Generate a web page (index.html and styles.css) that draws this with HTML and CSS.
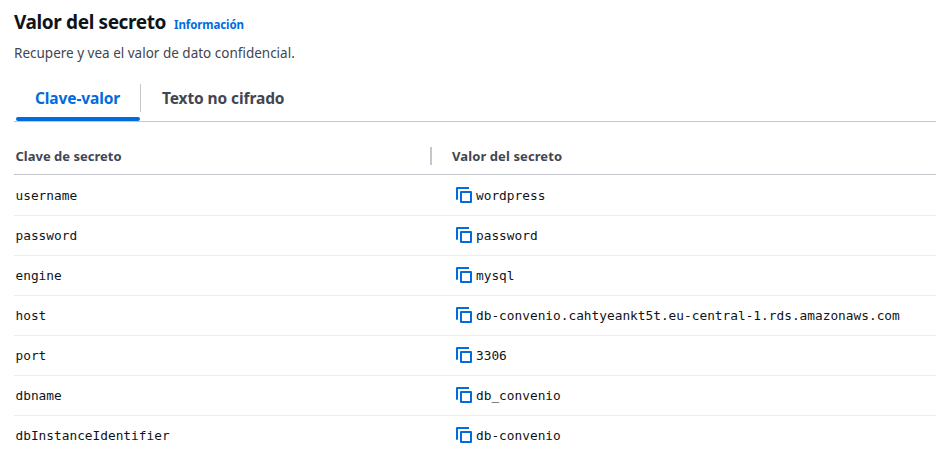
FILE: index.html
```html
<!DOCTYPE html>
<html lang="es">
<head>
<meta charset="utf-8">
<title>Valor del secreto</title>
<link rel="stylesheet" href="styles.css">
</head>
<body>
<svg class="defs" width="0" height="0"><symbol id="copy" viewBox="0 0 16 16"><path d="M5 5h10v10H5z M1 12.7V1h12" fill="none" stroke="currentColor" stroke-width="2" stroke-linejoin="round"/></symbol></svg>
<header class="head">
<h1><span class="title">Valor del secreto</span><a class="info">Información</a></h1>
<p>Recupere y vea el valor de dato confidencial.</p>
</header>
<nav class="tabs"><div class="tab active">Clave-valor</div><div class="tab">Texto no cifrado</div></nav>
<main class="table">
<div class="row header"><div class="key">Clave de secreto</div><div class="label">Valor del secreto</div></div>
<div class="row"><div class="key">username</div><div class="value"><svg><use href="#copy"/></svg>wordpress</div></div>
<div class="row"><div class="key">password</div><div class="value"><svg><use href="#copy"/></svg>password</div></div>
<div class="row"><div class="key">engine</div><div class="value"><svg><use href="#copy"/></svg>mysql</div></div>
<div class="row"><div class="key">host</div><div class="value"><svg><use href="#copy"/></svg>db-convenio.cahtyeankt5t.eu-central-1.rds.amazonaws.com</div></div>
<div class="row"><div class="key">port</div><div class="value"><svg><use href="#copy"/></svg>3306</div></div>
<div class="row"><div class="key">dbname</div><div class="value"><svg><use href="#copy"/></svg>db_convenio</div></div>
<div class="row"><div class="key">dbInstanceIdentifier</div><div class="value"><svg><use href="#copy"/></svg>db-convenio</div></div>
</main>
</body>
</html>
```
FILE: styles.css
```css
* { box-sizing: border-box; }
body { margin: 0; height: 469px; overflow: hidden; background: #fff; color: #0f141a; font-family: "Noto Sans", "Open Sans", sans-serif; }
.defs { display: block; }
.head { height: 78px; padding: 10px 0 0 14px; }
h1 { margin: 0; display: flex; align-items: baseline; gap: 8px; font-size: 19px; line-height: 24px; white-space: nowrap; }
.title { letter-spacing: -.38px; }
.info { color: #006ce0; font-size: 11.5px; letter-spacing: -.1px; }
p { margin: 6px 0 0; font-size: 13.5px; line-height: 20px; color: #424650; }
.tabs { height: 44px; margin-left: 14px; border-bottom: 1px solid #c6c6cd; display: flex; font-size: 15.5px; font-weight: 700; letter-spacing: -.1px; color: #424650; }
.tab { width: 127px; padding-left: 21px; line-height: 41px; white-space: nowrap; }
.tab + .tab { width: auto; position: relative; }
.tab.active { color: #006ce0; position: relative; }
.tab.active::after { content: ""; position: absolute; left: 2px; bottom: 0; width: 124px; height: 4px; border-radius: 3px; background: #006ce0; }
.tab + .tab::before { content: ""; position: absolute; left: -1px; top: 6px; width: 1px; height: 28px; background: #c6c6cd; }
.table { margin-left: 14px; padding-top: 16px; }
.row { display: flex; height: 40px; align-items: center; border-bottom: 1px solid #ebebf0; font: 12.8px/17px "DejaVu Sans Mono", monospace; color: #0f141a; white-space: nowrap; }
.key { width: 416px; padding-left: 1.5px; }
.value { display: flex; align-items: center; padding-left: 26px; }
.value svg { width: 16px; height: 16px; margin: 0 4px 1px 0; color: #006ce0; }
.header { height: 37px; border-color: #c6c6cd; font: 700 13px "Noto Sans", sans-serif; color: #424650; }
.header + .row { height: 41px; padding-top: 1px; }
.label { padding-left: 20px; border-left: 2px solid #c6c6cd; line-height: 18px; letter-spacing: .1px; }
.row:last-child { border-bottom-color: transparent; }
```
